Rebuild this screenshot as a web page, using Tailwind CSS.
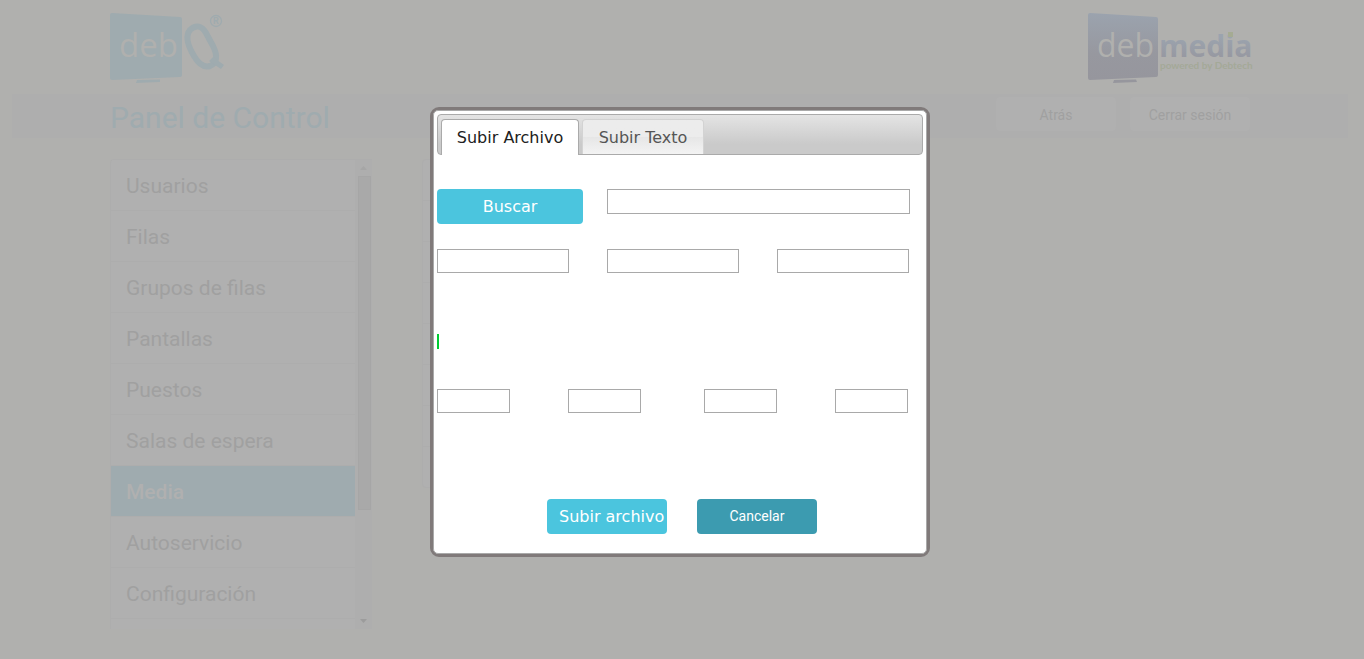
<!DOCTYPE html>
<html lang="es">
<head>
<meta charset="utf-8">
<title>Panel de Control</title>
<script src="https://cdn.jsdelivr.net/npm/@tailwindcss/browser@4"></script>
</head>
<body class="min-h-screen bg-[#b0b0ae] font-[Roboto,sans-serif] text-[#a0a0a0]">
<header class="flex h-[94px] justify-between pt-3 pr-[110px] pl-[110px]">
  <a href="#" aria-label="debQ">
    <svg width="116" height="72" viewBox="0 0 116 72" fill="#9fabaf">
      <path d="M2 1 L70 5 Q72 5 72 7 L72 63 Q72 65 70 65 L2 68 Q0 68 0 66 L0 3 Q0 1 2 1Z"/>
      <path d="M27 68 L50 67.500 L50 70 L26 71Z"/>
      <text x="9" y="45" font-family="Open Sans, sans-serif" font-size="33" fill="#b0b0ae">deb</text>
      <path d="M80 18 C86 12 92 14 96 21 L103 34 C108 44 107 51 100 54 C93 56 88 51 84 44 C78 34 75 24 80 18Z" fill="none" stroke="#9fabaf" stroke-width="6"/>
      <path d="M103 45 L114 53 L111 57 L99 49Z"/>
      <circle cx="106" cy="9" r="5.500" fill="none" stroke="#9fabaf" stroke-width="1.300"/>
      <text x="106" y="12" text-anchor="middle" font-family="Roboto, sans-serif" font-size="9" font-weight="700">R</text>
    </svg>
  </a>
  <a href="#" aria-label="debmedia, powered by Debtech">
    <svg width="166" height="72" viewBox="0 0 166 72">
      <defs>
        <linearGradient id="screen" x1="0" y1="0" x2="0" y2="1"><stop offset="0" stop-color="#9ba3ae"/><stop offset="0.600" stop-color="#97989f"/><stop offset="1" stop-color="#96969d"/></linearGradient>
        <linearGradient id="word" x1="0" y1="0" x2="0" y2="1"><stop offset="0.300" stop-color="#9ba3ae"/><stop offset="0.900" stop-color="#96969e"/></linearGradient>
      </defs>
      <path d="M2 1 L68 5 Q70 5 70 7 L70 63 Q70 65 68 65 L2 68 Q0 68 0 66 L0 3 Q0 1 2 1Z" fill="url(#screen)"/>
      <path d="M26 68 L48 67.500 L49 70 L25 71Z" fill="#96969d"/>
      <text x="9" y="45" font-family="Open Sans, sans-serif" font-size="32" fill="#b0b0ae">deb</text>
      <text x="71" y="45" font-family="Open Sans, sans-serif" font-size="30" font-weight="700" fill="url(#word)">media</text>
      <rect x="140" y="20" width="5" height="5" fill="#a5ab93"/>
      <text x="72" y="57" font-family="Lato, sans-serif" font-size="10" font-weight="700" fill="#a4a998">powered by Debtech</text>
    </svg>
  </a>
</header>
<div class="mr-4 ml-3 flex h-11 items-center justify-between bg-[#aeaeae] pr-[98px] pl-[98px]">
  <h1 class="pt-1 text-[30px] leading-10 text-[#9fabaf]">Panel de Control</h1>
  <nav class="flex gap-[14px] pb-1">
    <button class="h-[34px] w-[120px] rounded-[4px] bg-[#b0b0b0] pt-0.5 text-sm">Atrás</button>
    <button class="h-[34px] w-[120px] rounded-[4px] bg-[#b0b0b0] pt-0.5 text-sm">Cerrar sesión</button>
  </nav>
</div>
<main class="mt-[21px] flex gap-[50px] pl-[110px]">
  <div class="flex h-[470px] w-[262px] shrink-0 overflow-hidden rounded-tl-[4px] border-t border-l border-[#adadad]">
    <nav class="flex w-[244px] flex-col bg-[#b0b0b0] text-[21px]">
      <a href="#" class="flex h-[51px] shrink-0 items-center border-b border-[#adadad] px-[15px] pt-1">Usuarios</a>
      <a href="#" class="flex h-[51px] shrink-0 items-center border-b border-[#adadad] px-[15px] pt-1">Filas</a>
      <a href="#" class="flex h-[51px] shrink-0 items-center border-b border-[#adadad] px-[15px] pt-1">Grupos de filas</a>
      <a href="#" class="flex h-[51px] shrink-0 items-center border-b border-[#adadad] px-[15px] pt-1">Pantallas</a>
      <a href="#" class="flex h-[51px] shrink-0 items-center border-b border-[#adadad] px-[15px] pt-1">Puestos</a>
      <a href="#" class="flex h-[51px] shrink-0 items-center border-b border-[#adadad] px-[15px] pt-1">Salas de espera</a>
      <a href="#" class="flex h-[51px] shrink-0 items-center border-b border-[#adadad] bg-[#9fabaf] px-[15px] pt-1 font-medium text-[#b0b0b0]" aria-current="page">Media</a>
      <a href="#" class="flex h-[51px] shrink-0 items-center border-b border-[#adadad] px-[15px] pt-1">Autoservicio</a>
      <a href="#" class="flex h-[51px] shrink-0 items-center border-b border-[#adadad] px-[15px] pt-1">Configuración</a>
    </nav>
    <div class="flex w-[17px] flex-col items-center justify-between bg-[#aeaeae]">
      <svg class="mt-1.5 shrink-0" width="7" height="4" viewBox="0 0 7 4" fill="#a6a6a6"><path d="M0 4L3.500 0L7 4Z"/></svg>
      <div class="mt-1.5 mb-auto ml-px h-[334px] w-[13px] border border-[#a6a6a6] bg-[#a9a9a9]"></div>
      <svg class="mb-1.5 shrink-0" width="7" height="4" viewBox="0 0 7 4" fill="#9c9c9c"><path d="M0 0L3.500 4L7 0Z"/></svg>
    </div>
  </div>
  <div class="h-[329px] w-[400px] rounded-[4px] border border-[#adadad] bg-[#b0b0b0]">
    <div class="h-[41px] border-b border-[#adadad]"></div>
    <div class="h-[41px] border-b border-[#adadad]"></div>
    <div class="h-[41px] border-b border-[#adadad]"></div>
    <div class="h-[41px] border-b border-[#adadad]"></div>
    <div class="h-[41px] border-b border-[#adadad]"></div>
    <div class="h-[41px] border-b border-[#adadad]"></div>
    <div class="h-[41px] border-b border-[#adadad]"></div>
  </div>
</main>

<div class="fixed inset-0 flex items-start justify-center pt-[107px] pr-1">
  <section role="dialog" aria-label="Subir media" class="w-[500px] rounded-[9px] border-3 border-[#807a7a] bg-white font-['DejaVu_Sans',sans-serif] text-base text-[#222]">
    <div class="flex h-[444px] flex-col rounded-[5px] border border-[#aaa] px-[3px] pt-[3px]">
      <div role="tablist" class="flex h-[41px] shrink-0 items-end gap-[3px] rounded-[4px] border border-[#aaa] bg-linear-to-b from-[#e4e4e4] to-[#cacaca] to-75% pl-[3px]">
        <button role="tab" aria-selected="true" class="-mb-px h-9 w-[138px] rounded-t-[4px] border border-b-0 border-[#aaa] bg-white text-[#212121]">Subir Archivo</button>
        <button role="tab" aria-selected="false" class="h-[35px] w-[122px] rounded-t-[4px] border border-b-0 border-[#d3d3d3] bg-linear-to-b from-[#ececec] from-50% via-[#e6e6e6] via-50% to-[#f3f3f3] pt-0.5 text-[#555]">Subir Texto</button>
      </div>
      <div class="mt-[34px] flex items-start gap-6">
        <button class="h-[35px] w-[146px] rounded-[4px] bg-[#4bc5de] text-white">Buscar</button>
        <input type="text" aria-label="Archivo" class="h-[25px] w-[303px] border border-[#a9a9a9] bg-white px-1">
      </div>
      <div class="mt-[25px] flex gap-[38px]">
        <input type="text" aria-label="Nombre" class="h-6 w-[132px] border border-[#a9a9a9] px-1">
        <input type="text" aria-label="Tipo" class="h-6 w-[132px] border border-[#a9a9a9] px-1">
        <input type="text" aria-label="Duración" class="h-6 w-[132px] border border-[#a9a9a9] px-1">
      </div>
      <div role="progressbar" aria-label="Progreso" class="mt-[61px] h-[15px] w-0.5 bg-[#00cc33]"></div>
      <div class="mt-10 flex gap-[63px]">
        <div class="flex gap-[58px]">
          <input type="text" aria-label="Desde" class="h-6 w-[73px] border border-[#a9a9a9] px-1">
          <input type="text" aria-label="Hasta" class="h-6 w-[73px] border border-[#a9a9a9] px-1">
        </div>
        <div class="flex gap-[58px]">
          <input type="text" aria-label="Hora de inicio" class="h-6 w-[73px] border border-[#a9a9a9] px-1">
          <input type="text" aria-label="Hora de fin" class="h-6 w-[73px] border border-[#a9a9a9] px-1">
        </div>
      </div>
      <div class="mt-[86px] flex gap-[30px] pl-[110px]">
        <button class="h-[35px] w-[120px] rounded-[4px] bg-[#4bc5de] pl-3 text-left whitespace-nowrap text-white">Subir archivo</button>
        <button class="h-[35px] w-[120px] rounded-[4px] bg-[#3c9bb0] pb-0.5 font-[Roboto,sans-serif] text-sm text-white">Cancelar</button>
      </div>
    </div>
  </section>
</div>
</body>
</html>
